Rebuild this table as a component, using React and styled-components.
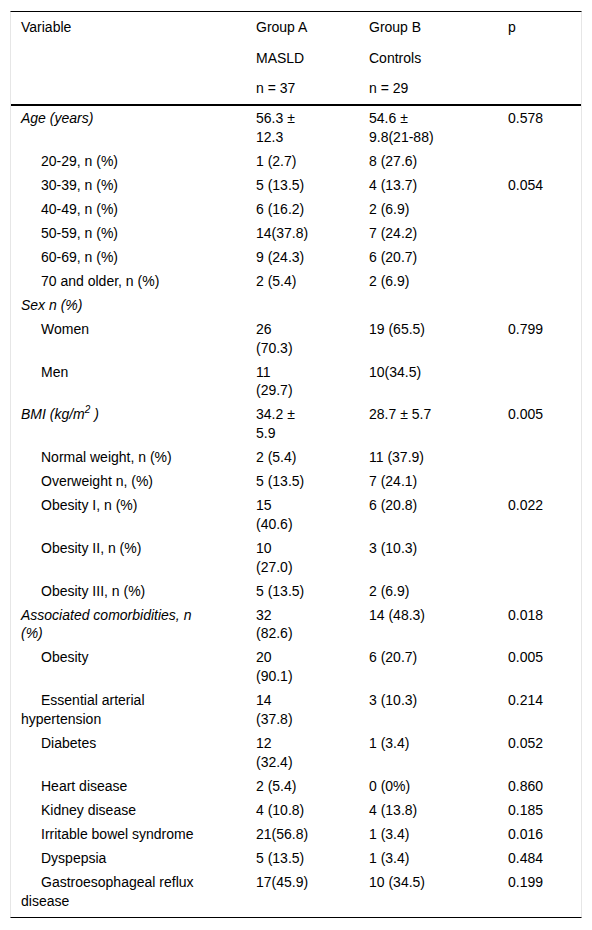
import React from "react";
import styled, { createGlobalStyle } from "styled-components";

const Global = createGlobalStyle`
  html, body { margin: 0; padding: 0; background: #fff; }
  body { font-family: "Liberation Sans", Arial, sans-serif; color: #000; }
`;

const Page = styled.div`
  padding: 11px 10px 0 10px;
`;

const Table = styled.div`
  width: 572px;
  box-sizing: border-box;
  border-top: 1px solid #000;
  border-bottom: 1px solid #000;
  border-left: 1px solid #e6e6e6;
  border-right: 1px solid #e6e6e6;
  font-size: 14px;
  padding-bottom: 4.5px;
`;

const Row = styled.div`
  display: grid;
  grid-template-columns: 235px 113px 139px 1fr;
  align-items: start;
`;

const Head = styled(Row)`
  border-bottom: 2px solid #000;
`;

const HeadCell = styled.div`
  padding-left: 10px;
  line-height: 30.7px;
  white-space: nowrap;
`;

const widths = { 1: 40, 2: 49, 3: 59, 4: 10 };

const Cell = styled.div`
  padding: 3px ${(p) => widths[p.$col]}px 2.2px 10px;
  line-height: 18.8px;
  font-style: ${(p) => (p.$italic ? "italic" : "normal")};
  text-indent: ${(p) => (p.$indent ? "20px" : "0")};

  sup {
    font-size: 10px;
    line-height: 0;
    vertical-align: 6px;
  }
`;

const rows = [
  { label: "Age (years)", cat: true, a: "56.3 ± 12.3", b: "54.6 ± 9.8(21-88)", p: "0.578" },
  { label: "20-29, n (%)", a: "1 (2.7)", b: "8 (27.6)", p: "" },
  { label: "30-39, n (%)", a: "5 (13.5)", b: "4 (13.7)", p: "0.054" },
  { label: "40-49, n (%)", a: "6 (16.2)", b: "2 (6.9)", p: "" },
  { label: "50-59, n (%)", a: "14(37.8)", b: "7 (24.2)", p: "" },
  { label: "60-69, n (%)", a: "9 (24.3)", b: "6 (20.7)", p: "" },
  { label: "70 and older, n (%)", a: "2 (5.4)", b: "2 (6.9)", p: "" },
  { label: "Sex n (%)", cat: true, a: "", b: "", p: "" },
  { label: "Women", a: "26 (70.3)", b: "19 (65.5)", p: "0.799" },
  { label: "Men", a: "11 (29.7)", b: "10(34.5)", p: "" },
  {
    label: (
      <>
        BMI (kg/m<sup>2</sup> )
      </>
    ),
    cat: true,
    a: "34.2 ± 5.9",
    b: "28.7 ± 5.7",
    p: "0.005",
  },
  { label: "Normal weight, n (%)", a: "2 (5.4)", b: "11 (37.9)", p: "" },
  { label: "Overweight n, (%)", a: "5 (13.5)", b: "7 (24.1)", p: "" },
  { label: "Obesity I, n (%)", a: "15 (40.6)", b: "6 (20.8)", p: "0.022" },
  { label: "Obesity II, n (%)", a: "10 (27.0)", b: "3 (10.3)", p: "" },
  { label: "Obesity III, n (%)", a: "5 (13.5)", b: "2 (6.9)", p: "" },
  { label: "Associated comorbidities, n (%)", cat: true, a: "32 (82.6)", b: "14 (48.3)", p: "0.018" },
  { label: "Obesity", a: "20 (90.1)", b: "6 (20.7)", p: "0.005" },
  { label: "Essential arterial hypertension", a: "14 (37.8)", b: "3 (10.3)", p: "0.214" },
  { label: "Diabetes", a: "12 (32.4)", b: "1 (3.4)", p: "0.052" },
  { label: "Heart disease", a: "2 (5.4)", b: "0 (0%)", p: "0.860" },
  { label: "Kidney disease", a: "4 (10.8)", b: "4 (13.8)", p: "0.185" },
  { label: "Irritable bowel syndrome", a: "21(56.8)", b: "1 (3.4)", p: "0.016" },
  { label: "Dyspepsia", a: "5 (13.5)", b: "1 (3.4)", p: "0.484" },
  { label: "Gastroesophageal reflux disease", a: "17(45.9)", b: "10 (34.5)", p: "0.199" },
];

export default function App() {
  return (
    <Page>
      <Global />
      <Table>
        <Head>
          <HeadCell>Variable</HeadCell>
          <HeadCell>
            <div>Group A</div>
            <div>MASLD</div>
            <div>n = 37</div>
          </HeadCell>
          <HeadCell>
            <div>Group B</div>
            <div>Controls</div>
            <div>n = 29</div>
          </HeadCell>
          <HeadCell>p</HeadCell>
        </Head>
        {rows.map((r, i) => (
          <Row key={i}>
            <Cell $col={1} $italic={r.cat} $indent={!r.cat}>
              {r.label}
            </Cell>
            <Cell $col={2}>{r.a}</Cell>
            <Cell $col={3}>{r.b}</Cell>
            <Cell $col={4}>{r.p}</Cell>
          </Row>
        ))}
      </Table>
    </Page>
  );
}
